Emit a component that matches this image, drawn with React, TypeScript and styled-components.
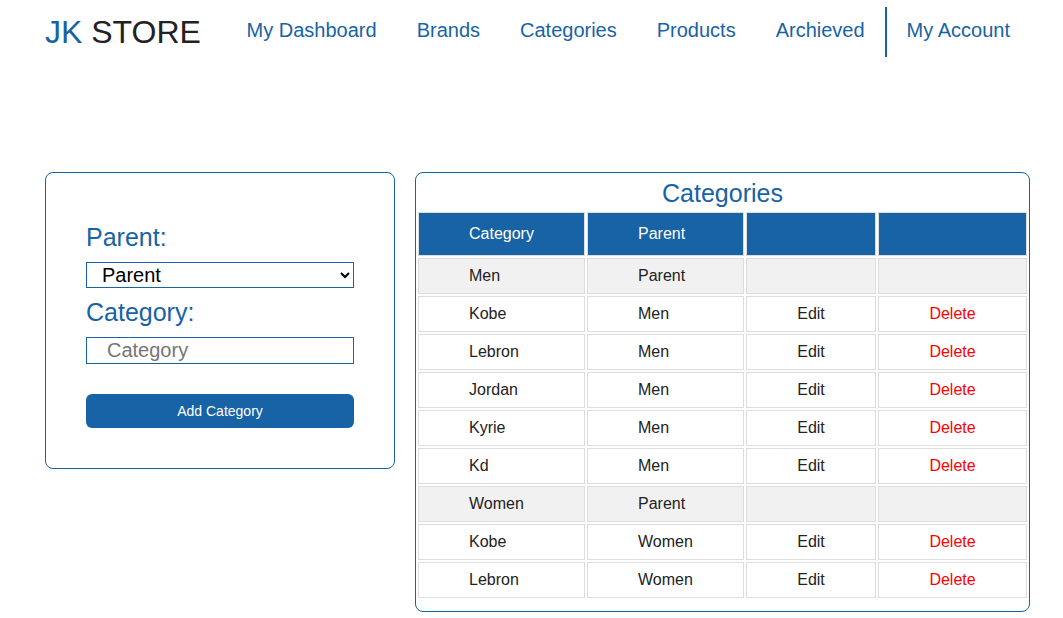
import React from "react";
import styled, { createGlobalStyle } from "styled-components";

const BLUE = "#1862a6";

const Global = createGlobalStyle`
  html, body { margin: 0; padding: 0; background: #fff; }
  body { font-family: "Liberation Sans", Arial, sans-serif; color: #222; }
  * { box-sizing: border-box; }
`;

const Page = styled.div`
  padding: 0 33px 0 45px;
`;

const Header = styled.header`
  display: flex;
  justify-content: space-between;
  align-items: flex-start;
  padding-top: 7px;
`;

const Logo = styled.div`
  font-size: 32px;
  line-height: 37px;
  padding-top: 7px;
  color: #222;
`;

const LogoAccent = styled.span`
  color: ${BLUE};
`;

const Nav = styled.nav`
  display: flex;
  align-items: flex-start;
`;

const NavLink = styled.a<{ $divider?: boolean }>`
  display: block;
  height: 50px;
  padding: 12px 20px 0 20px;
  font-size: 20px;
  line-height: 23px;
  color: ${BLUE};
  text-decoration: none;
  border-left: ${(p) => (p.$divider ? `2px solid ${BLUE}` : "none")};
`;

const Main = styled.main`
  display: flex;
  align-items: flex-start;
  gap: 20px;
  margin-top: 115px;
`;

const Card = styled.section<{ $w: number }>`
  width: ${(p) => p.$w}px;
  border: 1px solid ${BLUE};
  border-radius: 8px;
  background: #fff;
`;

const Form = styled.form`
  display: flex;
  flex-direction: column;
  padding: 50px 40px 40px 40px;
`;

const Label = styled.label`
  font-size: 25px;
  line-height: 29px;
  color: ${BLUE};
`;

const Select = styled.select`
  width: 268px;
  height: 26px;
  margin: 10px 0;
  padding: 0 6px 0 11px;
  border: 1px solid ${BLUE};
  border-radius: 0;
  background: #fff;
  font-family: "Liberation Sans", Arial, sans-serif;
  font-size: 20px;
  color: #000;
`;

const Input = styled.input`
  width: 268px;
  height: 27px;
  margin-top: 10px;
  padding: 0 0 0 20px;
  border: 1px solid ${BLUE};
  border-radius: 0;
  font-family: "Liberation Sans", Arial, sans-serif;
  font-size: 20px;
  &::placeholder { color: #757575; }
`;

const Button = styled.button`
  width: 268px;
  height: 34px;
  margin-top: 30px;
  border: none;
  border-radius: 6px;
  background: ${BLUE};
  color: #fff;
  font-family: "Liberation Sans", Arial, sans-serif;
  font-size: 14px;
`;

const TableWrap = styled.div`
  padding: 6px 0 11px;
`;

const Title = styled.h2`
  margin: 0 0 2px;
  font-size: 25px;
  line-height: 29px;
  font-weight: normal;
  text-align: center;
  color: ${BLUE};
`;

const Table = styled.table`
  width: 100%;
  table-layout: fixed;
  border-collapse: separate;
  border-spacing: 2px;
  font-size: 16px;
`;

const Th = styled.th<{ $w: number }>`
  width: ${(p) => p.$w}px;
  padding: 12px 0 12px 50px;
  line-height: 18px;
  background: ${BLUE};
  color: #fff;
  font-weight: normal;
  text-align: left;
  border: 1px solid #ddd;
`;

const Td = styled.td<{ $center?: boolean; $danger?: boolean; $gray?: boolean }>`
  padding: ${(p) => (p.$center ? "8px 0" : "8px 0 8px 50px")};
  line-height: 18px;
  text-align: ${(p) => (p.$center ? "center" : "left")};
  color: ${(p) => (p.$danger ? "#ff0000" : "#222")};
  background: ${(p) => (p.$gray ? "#f1f1f1" : "#fff")};
  border: 1px solid #ddd;
`;

type Row = { name: string; parent: string; isParent?: boolean };

const rows: Row[] = [
  { name: "Men", parent: "Parent", isParent: true },
  { name: "Kobe", parent: "Men" },
  { name: "Lebron", parent: "Men" },
  { name: "Jordan", parent: "Men" },
  { name: "Kyrie", parent: "Men" },
  { name: "Kd", parent: "Men" },
  { name: "Women", parent: "Parent", isParent: true },
  { name: "Kobe", parent: "Women" },
  { name: "Lebron", parent: "Women" },
];

export default function App() {
  return (
    <>
      <Global />
      <Page>
        <Header>
          <Logo>
            <LogoAccent>JK</LogoAccent> STORE
          </Logo>
          <Nav>
            <NavLink href="#">My Dashboard</NavLink>
            <NavLink href="#">Brands</NavLink>
            <NavLink href="#">Categories</NavLink>
            <NavLink href="#">Products</NavLink>
            <NavLink href="#">Archieved</NavLink>
            <NavLink href="#" $divider>My Account</NavLink>
          </Nav>
        </Header>
        <Main>
          <Card $w={350}>
            <Form onSubmit={(e) => e.preventDefault()}>
              <Label>Parent:</Label>
              <Select defaultValue="Parent">
                <option>Parent</option>
                <option>Men</option>
                <option>Women</option>
              </Select>
              <Label>Category:</Label>
              <Input placeholder="Category" />
              <Button type="submit">Add Category</Button>
            </Form>
          </Card>
          <Card $w={615}>
            <TableWrap>
              <Title>Categories</Title>
              <Table>
                <thead>
                  <tr>
                    <Th $w={167}>Category</Th>
                    <Th $w={157}>Parent</Th>
                    <Th $w={130}></Th>
                    <Th $w={149}></Th>
                  </tr>
                </thead>
                <tbody>
                  {rows.map((r, i) => (
                    <tr key={i}>
                      <Td $gray={r.isParent}>{r.name}</Td>
                      <Td $gray={r.isParent}>{r.parent}</Td>
                      <Td $center $gray={r.isParent}>{r.isParent ? "" : "Edit"}</Td>
                      <Td $center $danger $gray={r.isParent}>{r.isParent ? "" : "Delete"}</Td>
                    </tr>
                  ))}
                </tbody>
              </Table>
            </TableWrap>
          </Card>
        </Main>
      </Page>
    </>
  );
}
